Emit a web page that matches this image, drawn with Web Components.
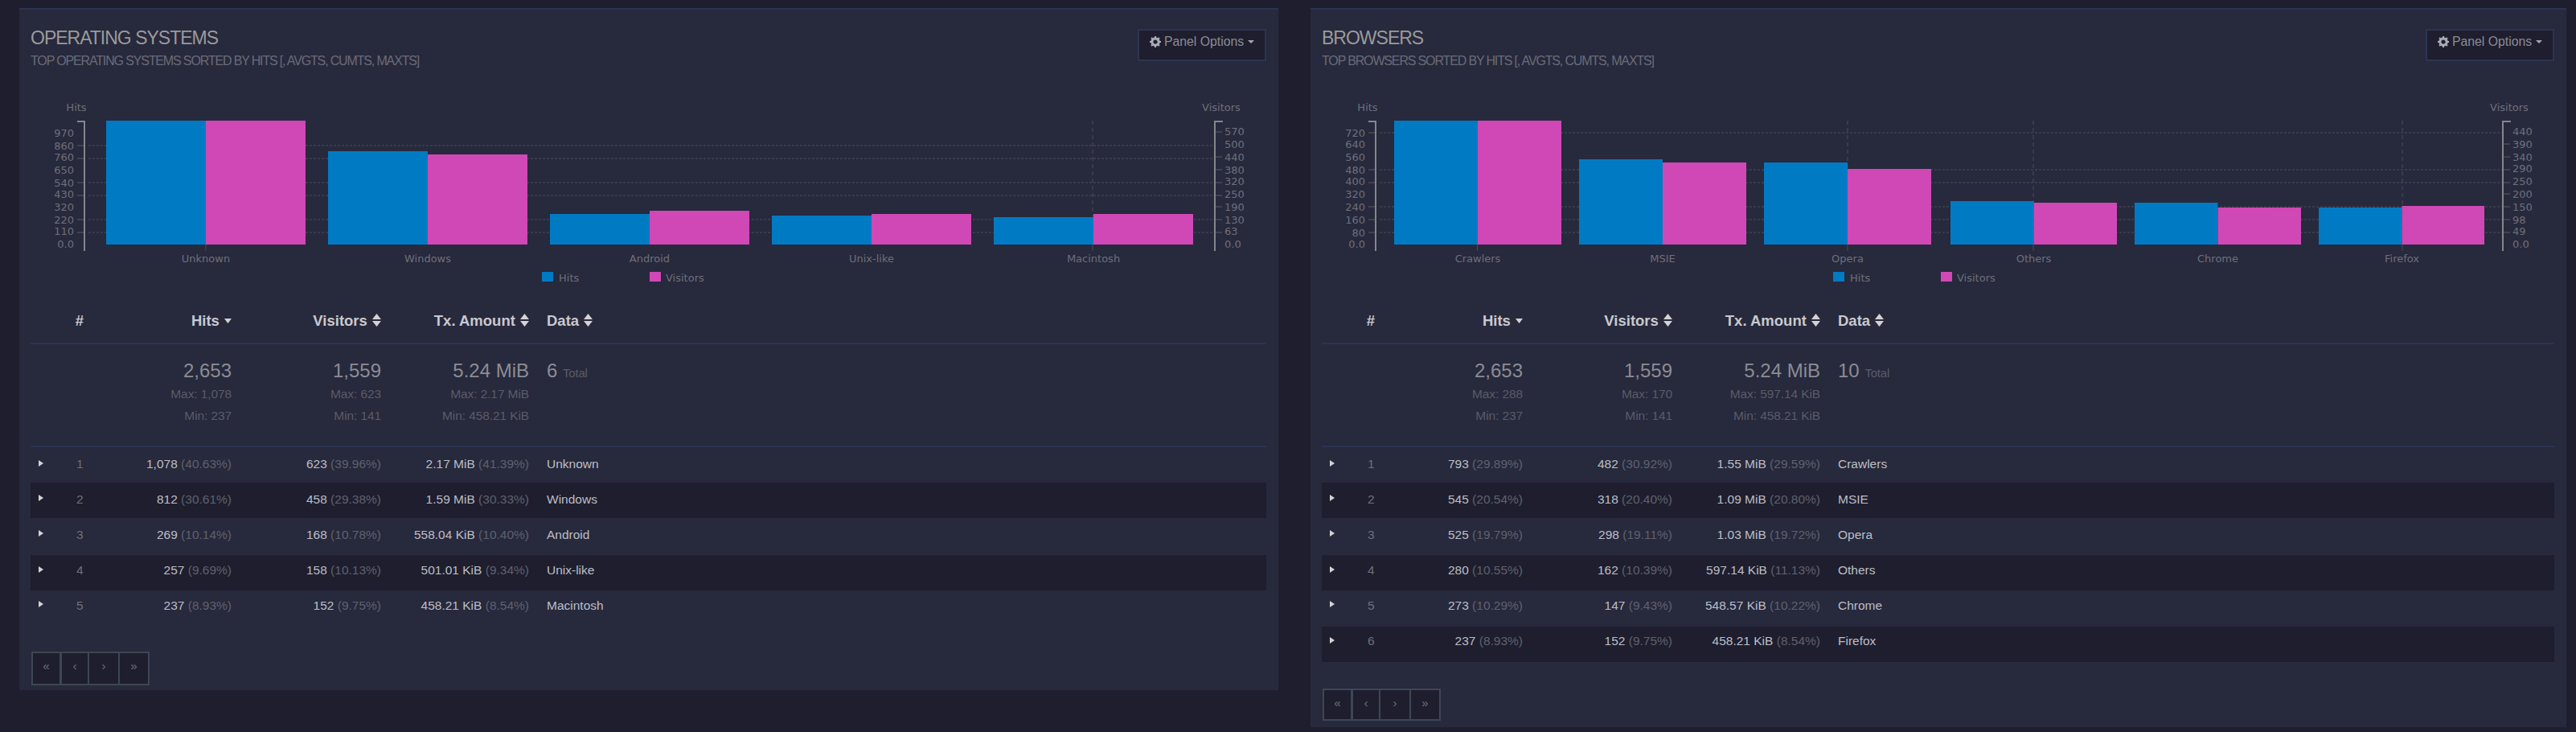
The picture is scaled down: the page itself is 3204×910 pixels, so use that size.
<!DOCTYPE html>
<html><head><meta charset="utf-8"><style>
html,body{margin:0;background:#1e1e2f;}
body{width:3204px;height:910px;overflow:hidden;font-family:"Liberation Sans",sans-serif;}
</style></head><body>
<ga-dashboard>
<ga-panel id="os" data-title="Operating Systems" data-sub="Top Operating Systems sorted by hits [, avgts, cumts, maxts]"></ga-panel>
<ga-panel id="br" data-title="Browsers" data-sub="Top Browsers sorted by hits [, avgts, cumts, maxts]"></ga-panel>
</ga-dashboard>
<script>
const DATA={
os:{w:1566,pgt:'31.4px',pgh:'38px',pgb:'6px',
 chart:{left:81,right:1487,bars:[[108,232,356],[384,508,632],[660,784,908],[936,1060,1184],[1212,1336,1460]],
  names:['Unknown','Windows','Android','Unix-like','Macintosh'],
  tops:[[150,150],[188,192],[266,262],[268,266],[270,266]],
  grid:[181,197,227,243,273,289],rt:[164,195,211,227,243,257,273,289],
  yl:[['970',165],['860',181],['760',195],['650',211],['540',227],['430',241],['320',257],['220',273],['110',287],['0.0',303]],
  yr:[['570',163],['500',179],['440',195],['380',211],['320',225],['250',241],['190',257],['130',273],['63',287],['0.0',303]],
  vfull:[1335],vtick:[232,1335],legend:[650,784]},
 sum:['2,653','1,559','5.24 MiB','6'],max:['1,078','623','2.17 MiB'],min:['237','141','458.21 KiB'],
 rows:[['1,078','(40.63%)','623','(39.96%)','2.17 MiB','(41.39%)','Unknown'],
 ['812','(30.61%)','458','(29.38%)','1.59 MiB','(30.33%)','Windows'],
 ['269','(10.14%)','168','(10.78%)','558.04 KiB','(10.40%)','Android'],
 ['257','(9.69%)','158','(10.13%)','501.01 KiB','(9.34%)','Unix-like'],
 ['237','(8.93%)','152','(9.75%)','458.21 KiB','(8.54%)','Macintosh']]},
br:{w:1562,pgt:'33.6px',pgh:'36px',pgb:'8px',
 chart:{left:81,right:1483,bars:[[104,208,312],[334,438,542],[564,668,772],[796,899.5,1003],[1025,1128.5,1232],[1254,1357.5,1460]],
  names:['Crawlers','MSIE','Opera','Others','Chrome','Firefox'],
  tops:[[150,150],[198,202],[202,210],[250,252],[252,258],[258,256]],
  grid:[165,211,227,257,273,289],rt:[179,195,211,227,241,257,273,289],
  yl:[['720',165],['640',179],['560',195],['480',211],['400',225],['320',241],['240',257],['160',273],['80',289],['0.0',303]],
  yr:[['440',163],['390',179],['340',195],['290',209],['250',225],['200',241],['150',257],['98',273],['49',287],['0.0',303]],
  vfull:[668,899,1358],vtick:[207.5,668,899,1358],legend:[650,784]},
 sum:['2,653','1,559','5.24 MiB','10'],max:['288','170','597.14 KiB'],min:['237','141','458.21 KiB'],
 rows:[['793','(29.89%)','482','(30.92%)','1.55 MiB','(29.59%)','Crawlers'],
 ['545','(20.54%)','318','(20.40%)','1.09 MiB','(20.80%)','MSIE'],
 ['525','(19.79%)','298','(19.11%)','1.03 MiB','(19.72%)','Opera'],
 ['280','(10.55%)','162','(10.39%)','597.14 KiB','(11.13%)','Others'],
 ['273','(10.29%)','147','(9.43%)','548.57 KiB','(10.22%)','Chrome'],
 ['237','(8.93%)','152','(9.75%)','458.21 KiB','(8.54%)','Firefox']]}
};

class GaDashboard extends HTMLElement{
 constructor(){super();this.attachShadow({mode:'open'}).innerHTML=`<style>
 :host{display:flex;align-items:flex-start;gap:40px;padding:10px 12px 0 24px;}
 </style><slot></slot>`;}
}
class GaOptions extends HTMLElement{
 constructor(){super();this.attachShadow({mode:'open'}).innerHTML=`<style>
 :host{display:flex;box-sizing:border-box;width:160px;height:40px;background:#1e1e2f;border:2px solid #2b3553;justify-content:center;padding-top:4px;gap:4px;color:#8a8c94;font:15.8px "Liberation Sans",sans-serif;line-height:20px;flex:none}
 svg{margin-top:3px}
 .c{width:0;height:0;border:4.5px solid transparent;border-top-color:#a3a5ab;border-bottom:0;margin:8px 0 0 1px}
 </style><svg width="14" height="14" viewBox="0 0 14 14"><circle cx="7" cy="7" r="4.2" fill="none" stroke="#a8acb4" stroke-width="3.2"/><path d="M7 0v3M7 11v3M0 7h3M11 7h3M2 2l2 2M10 10l2 2M12 2l-2 2M4 10l-2 2" stroke="#a8acb4" stroke-width="2"/></svg><span>Panel Options</span><i class="c"></i>`;}
}
class GaChart extends HTMLElement{
 constructor(){super();this.attachShadow({mode:'open'}).innerHTML=`<style>
 :host{display:block;height:280px}
 svg{display:block;height:280px;overflow:visible}
 text{font:13px "DejaVu Sans",sans-serif;fill:#6e7079}
 </style><svg></svg>`;}
 show(d,w){
  const svg=this.shadowRoot.querySelector('svg');
  svg.setAttribute('width',w);svg.setAttribute('viewBox',`14 104 ${w} 280`);
  let s='';
  const dash='stroke="#4c4e5a" stroke-width="1.2" stroke-dasharray="3 2"';
  const vdash='stroke="#4c4e5a" stroke-width="1" stroke-dasharray="5 4"';
  const tick='stroke="#4a4c56" stroke-width="1.5"';
  d.grid.forEach(y=>{s+=`<line x1="${d.left+5}" x2="${d.right}" y1="${y}" y2="${y}" ${dash}/><line x1="${d.left-9}" x2="${d.left}" y1="${y}" y2="${y}" ${tick}/>`;});
  d.rt.forEach(y=>{s+=`<line x1="${d.right}" x2="${d.right+9}" y1="${y}" y2="${y}" ${tick}/>`;});
  d.vfull.forEach(x=>{s+=`<line x1="${x}" x2="${x}" y1="150" y2="304" ${vdash}/>`;});
  d.vtick.forEach(x=>{s+=`<line x1="${x}" x2="${x}" y1="304" y2="312" stroke="#4a4c56" stroke-width="1"/>`;});
  d.bars.forEach((b,i)=>{
   s+=`<rect x="${b[0]}" y="${d.tops[i][0]}" width="${b[1]-b[0]}" height="${304-d.tops[i][0]}" fill="#007bc3"/>`;
   s+=`<rect x="${b[1]}" y="${d.tops[i][1]}" width="${b[2]-b[1]}" height="${304-d.tops[i][1]}" fill="#d048b6"/>`;
   s+=`<text x="${b[1]}" y="325.5" text-anchor="middle">${d.names[i]}</text>`;
  });
  const ax='stroke="#85868c" stroke-width="2" fill="none"';
  s+=`<path d="M${d.left-9} 151H${d.left}V312" ${ax}/>`;
  s+=`<path d="M${d.right+10} 151H${d.right}V312" ${ax}/>`;
  d.yl.forEach(t=>{s+=`<text x="${d.left-13}" y="${t[1]+4.5}" text-anchor="end">${t[0]}</text>`;});
  d.yr.forEach(t=>{s+=`<text x="${d.right+12}" y="${t[1]+4.5}">${t[0]}</text>`;});
  s+=`<text x="${d.left-10}" y="137.5" text-anchor="middle">Hits</text>`;
  s+=`<text x="${d.right+8}" y="137.5" text-anchor="middle">Visitors</text>`;
  s+=`<rect x="${d.legend[0]}" y="338" width="14" height="12" fill="#007bc3"/><text x="${d.legend[0]+21}" y="349.5">Hits</text>`;
  s+=`<rect x="${d.legend[1]}" y="338" width="14" height="12" fill="#d048b6"/><text x="${d.legend[1]+20}" y="349.5">Visitors</text>`;
  svg.innerHTML=s;
 }
}
class GaTable extends HTMLElement{
 constructor(){super();this.attachShadow({mode:'open'}).innerHTML=`<style>
 :host{display:block;color:#9a9a9a;font:15.5px "Liberation Sans",sans-serif}
 .r{display:grid;grid-template-columns:70px 180px 186px 184px 1fr;align-items:center}
 .n{text-align:right;white-space:nowrap}
 .d{padding-left:22px;white-space:nowrap}
 .head{height:42px;border-bottom:2px solid #2b3553;font-weight:700;color:#c8c9ce;font-size:18.5px;align-items:start}
 .head>div{line-height:30px}
 .head .hash{text-align:right;padding-right:4px}
 .sort{display:inline-block;margin-left:1px}
 .sum{height:126px;border-bottom:2px solid #2b3553;align-items:start}
 .sum .big{font-size:24px;color:#8b8c93;line-height:30px;margin-top:18px}
 .sum .s{line-height:26.5px;color:#5a5c66;letter-spacing:-.1px}
 .sum .s:nth-child(2){margin-top:1px}
 .sum .t{font-size:15px;color:#5a5c66;letter-spacing:-.2px}
 .row{height:44.2px;color:#bcbec4}
 .row:nth-child(5){height:45.8px}
 .row .p{color:#5f616c}
 .row.odd{background:#1e1e2f}
 .row>div{padding-bottom:var(--pb)}
 .row .cell0{display:flex;align-items:center;padding-left:10px}
 .row .cell0 b{width:0;height:0;border:4.5px solid transparent;border-left:6px solid #d3d3d3;border-right:0;margin:0 2px 3px 0}
 .row .cell0 i{font-style:normal;color:#6f7079;margin-left:39px}
 </style><div id="t"></div>`;}
 show(d){
  const caret=`<svg class="sort" width="9" height="6" viewBox="0 0 9 6" style="vertical-align:3px"><path d="M0 0h9L4.5 6z" fill="#d3d3d3"/></svg>`;
  const both=`<svg class="sort" width="11" height="16" viewBox="0 0 11 16" style="vertical-align:-1px"><path d="M0 7h11L5.5 0zM0 9h11L5.5 16z" fill="#d3d3d3"/></svg>`;
  let h=`<div class="r head"><div class="hash">#</div><div class="n">Hits ${caret}</div><div class="n">Visitors ${both}</div><div class="n">Tx. Amount ${both}</div><div class="d">Data ${both}</div></div>`;
  h+=`<div class="r sum"><div></div>`;
  for(let i=0;i<3;i++)h+=`<div class="n"><div class="big">${d.sum[i]}</div><div class="s">Max: ${d.max[i]}</div><div class="s">Min: ${d.min[i]}</div></div>`;
  h+=`<div class="d"><div class="big">${d.sum[3]} <span class="t">Total</span></div></div></div>`;
  const pb=[2,3,5,6,7,7];
  d.rows.forEach((r,i)=>{
   h+=`<div class="r row${i%2?' odd':''}" style="--pb:${pb[i]}px"><div class="cell0"><b></b><i>${i+1}</i></div><div class="n">${r[0]} <span class="p">${r[1]}</span></div><div class="n">${r[2]} <span class="p">${r[3]}</span></div><div class="n">${r[4]} <span class="p">${r[5]}</span></div><div class="d">${r[6]}</div></div>`;
  });
  this.shadowRoot.getElementById('t').innerHTML=h;
 }
}
class GaPager extends HTMLElement{
 constructor(){super();this.attachShadow({mode:'open'}).innerHTML=`<style>
 :host{display:inline-flex;vertical-align:top;margin-left:1px;border:2px solid #3d4754;background:#1e1e2f;height:var(--pgh,38px);color:#6f7078;font:15px "Liberation Sans",sans-serif}
 span{display:block;width:35px;text-align:center;line-height:31px}
 span+span{border-left:2px solid #3d4754}
 span:nth-child(2){width:33px}
 span:nth-child(3){border-left-width:3px;width:32px}
 span:nth-child(4){width:36px}
 </style><span>«</span><span>‹</span><span>›</span><span>»</span>`;}
}
class GaPanel extends HTMLElement{
 constructor(){super();this.attachShadow({mode:'open'}).innerHTML=`<style>
 :host{display:block;box-sizing:border-box;background:#27293d;border-top:2px solid #2b3553;padding:24px 15px var(--pgb,6px) 14px;flex:none}
 header{display:flex;justify-content:space-between;align-items:flex-start;height:68px}
 h3{margin:-2px 0 0;font:400 23px/26px "Liberation Sans",sans-serif;letter-spacing:-1px;text-transform:uppercase;color:#9a9a9a}
 p{margin:6px 0 0;font:400 16px/20px "Liberation Sans",sans-serif;letter-spacing:-1.15px;text-transform:uppercase;color:#6a6c76;white-space:nowrap}
 .pg{padding-top:var(--pgt,32px);line-height:0}
 </style><header><div><h3></h3><p></p></div><ga-options></ga-options></header>
 <ga-chart></ga-chart><ga-table></ga-table><div class="pg"><ga-pager></ga-pager></div>`;}
 connectedCallback(){
  const s=this.shadowRoot,d=DATA[this.id];
  this.style.width=d.w+'px';
  this.style.setProperty('--pgt',d.pgt);this.style.setProperty('--pgh',d.pgh);this.style.setProperty('--pgb',d.pgb);
  s.querySelector('h3').textContent=this.dataset.title;
  s.querySelector('p').textContent=this.dataset.sub;
  s.querySelector('ga-chart').show(d.chart,d.w-29);
  s.querySelector('ga-table').show(d);
 }
}
customElements.define('ga-dashboard',GaDashboard);
customElements.define('ga-options',GaOptions);
customElements.define('ga-chart',GaChart);
customElements.define('ga-table',GaTable);
customElements.define('ga-pager',GaPager);
customElements.define('ga-panel',GaPanel);
</script></body></html>
